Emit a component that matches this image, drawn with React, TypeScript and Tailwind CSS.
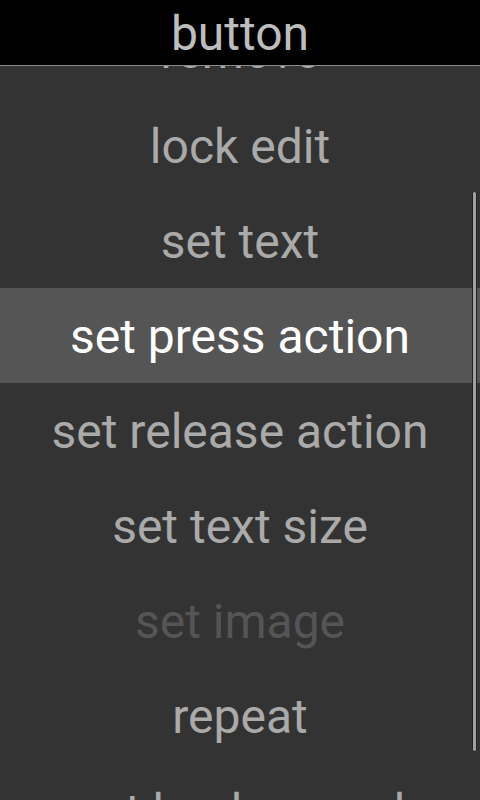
const items: { label: string; state?: "active" | "disabled" }[] = [
  { label: "remove" },
  { label: "lock edit" },
  { label: "set text" },
  { label: "set press action", state: "active" },
  { label: "set release action" },
  { label: "set text size" },
  { label: "set image", state: "disabled" },
  { label: "repeat" },
  { label: "set background" },
]

export default function App() {
  return (
    <div className="flex h-[800px] w-[480px] flex-col overflow-hidden bg-[#333333] font-['Roboto',sans-serif]">
      <header className="flex h-[66px] shrink-0 items-center justify-center border-b border-[#8a8a8a] bg-black pt-[3px]">
        <h1 className="text-[48px] leading-none text-[#bdbdbd]">button</h1>
      </header>
      <div className="relative flex-1 overflow-hidden">
        <ul className="-mt-[63px] flex flex-col">
          {items.map((item) => (
            <li
              key={item.label}
              className={`flex h-[95px] items-center justify-center pt-[3px] text-[48px] leading-none ${
                item.state === "active"
                  ? "bg-[#555555] text-white"
                  : item.state === "disabled"
                    ? "text-[#555555]"
                    : "text-[#aaaaaa]"
              }`}
            >
              {item.label}
            </li>
          ))}
        </ul>
        {/* scroll indicator */}
        <div className="absolute top-[125px] right-[3px] h-[561px] w-[5px] rounded-full border border-[#222222] bg-[#a0a0a0]" />
      </div>
    </div>
  )
}
